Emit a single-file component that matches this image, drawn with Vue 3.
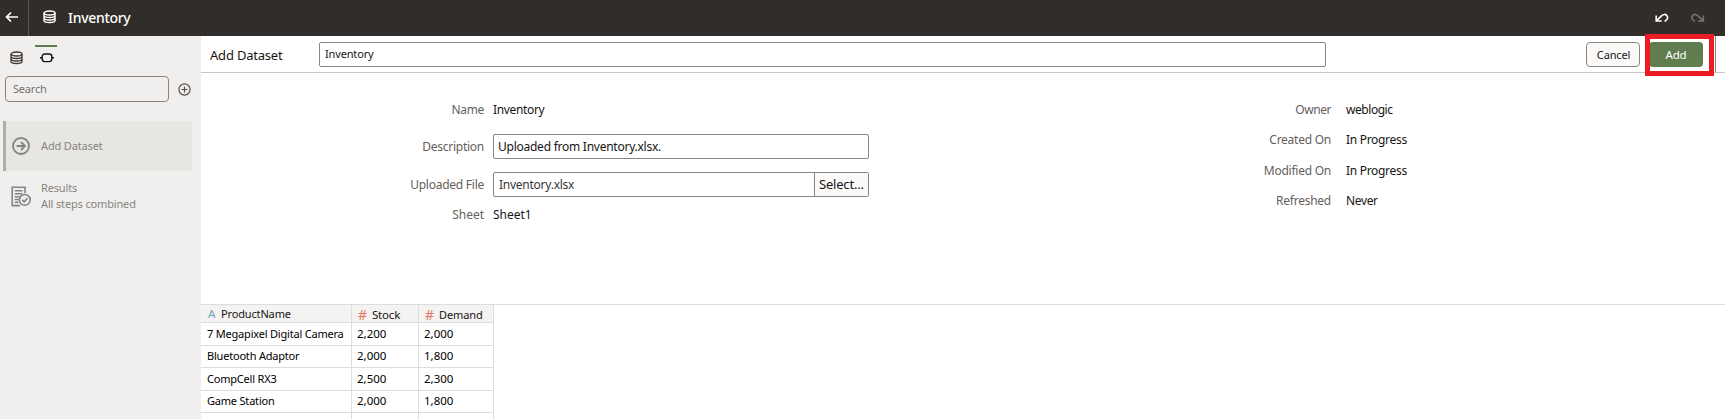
<script setup>
const details = [
  { label: 'Owner', value: 'weblogic', fit: 'v-owner', lfit: 'l-owner' },
  { label: 'Created On', value: 'In Progress', fit: 'v-prog', lfit: 'l-created' },
  { label: 'Modified On', value: 'In Progress', fit: 'v-prog', lfit: 'l-modified' },
  { label: 'Refreshed', value: 'Never', fit: 'v-never', lfit: 'l-refreshed' },
]
const rows = [
  ['7 Megapixel Digital Camera', '2,200', '2,000'],
  ['Bluetooth Adaptor', '2,000', '1,800'],
  ['CompCell RX3', '2,500', '2,300'],
  ['Game Station', '2,000', '1,800'],
  ['', '', ''],
]
</script>

<template>
  <div class="app">
    <header class="top">
      <div class="back">
        <svg width="14" height="12" viewBox="0 0 14 12" fill="none" stroke="#fff" stroke-width="1.7"><path d="M13 6H1.500M6 1.500L1.500 6L6 10.500" /></svg>
      </div>
      <svg class="top-db" width="14" height="14" viewBox="0 0 14 14" fill="none" stroke="#fff" stroke-width="1.400"><ellipse cx="6.500" cy="3" rx="5.500" ry="2" /><path d="M1 3V10.500C1 11.700 3.500 12.500 6.500 12.500S12 11.700 12 10.500V3M1 5.500C1 6.700 3.500 7.500 6.500 7.500S12 6.700 12 5.500M1 8C1 9.200 3.500 10 6.500 10S12 9.200 12 8" /></svg>
      <span class="title">Inventory</span>
      <span class="grow"></span>
      <svg class="undo" width="14" height="11" viewBox="0 0 14 11" fill="none" stroke="#fff" stroke-width="1.600"><path d="M1.200 2.500V8H6.700M1.500 7.700L6.500 2.900C8.500 1 10.500 1 11.700 2.500C13 4.100 12.600 6 11.200 7.200L9.600 8.500" /></svg>
      <svg class="redo" width="14" height="11" viewBox="0 0 14 11" fill="none" stroke="#75716e" stroke-width="1.600"><path d="M12.300 2.500V8H6.800M12 7.700L7 2.900C5 1 3 1 1.800 2.500C.5 4.100 .9 6 2.300 7.200L3.900 8.500" /></svg>
    </header>

    <div class="body">
      <aside class="side">
        <nav class="tabs">
          <div class="tab">
            <svg width="14" height="14" viewBox="0 0 14 14" fill="none" stroke="#3e3a37" stroke-width="1.300"><ellipse cx="6.500" cy="3" rx="5.500" ry="2" /><path d="M1 3V10.500C1 11.700 3.500 12.500 6.500 12.500S12 11.700 12 10.500V3M1 5.500C1 6.700 3.500 7.500 6.500 7.500S12 6.700 12 5.500M1 8C1 9.200 3.500 10 6.500 10S12 9.200 12 8" /></svg>
          </div>
          <div class="tab active">
            <svg width="14" height="10" viewBox="0 0 14 10" fill="none" stroke="#161513" stroke-width="1.400"><rect x="2.200" y="1" width="9.600" height="7.600" rx="2.500" /><path d="M0 4.800H2.200M11.800 4.800H14" /></svg>
          </div>
        </nav>
        <div class="search-row">
          <div class="search"><span class="t-search">Search</span></div>
          <svg width="13" height="13" viewBox="0 0 13 13" fill="none" stroke="#55514e" stroke-width="1.200"><circle cx="6.500" cy="6.500" r="5.600" /><path d="M6.500 3.500V9.500M3.500 6.500H9.500" /></svg>
        </div>
        <div class="step selected">
          <svg width="18" height="18" viewBox="0 0 18 18" fill="none" stroke="#868482" stroke-width="1.800"><circle cx="9" cy="9" r="8" /><path d="M4.600 9H12.800M9 5L13 9L9 13" /></svg>
          <span class="t-step">Add Dataset</span>
        </div>
        <div class="step results">
          <svg width="20" height="21" viewBox="0 0 20 21" fill="none" stroke="#868482" stroke-width="1.600"><path d="M14 7V1.200H1.200V19.600H9M3.700 4.700H11.500M3.700 7.700H11.500M3.700 10.700H8.500M3.700 13.500H7.500M3.700 16.400H7.500" /><circle cx="13.800" cy="13.900" r="5.400" /><path d="M11.200 13.900L13.200 15.800L16.500 12.200" /></svg>
          <div class="lines"><span class="t-results">Results</span><span class="t-all">All steps combined</span></div>
        </div>
      </aside>

      <main class="main">
        <div class="toolbar">
          <span class="tb-label">Add Dataset</span>
          <div class="tb-input"><span class="t-inv">Inventory</span></div>
          <div class="cancel"><span class="t-cancel">Cancel</span></div>
          <div class="add-wrap">
            <div class="add"><span class="t-add">Add</span></div>
            <div class="marker"></div>
          </div>
          <div class="edge"></div>
        </div>

        <section class="form">
          <div class="left">
            <div class="row r-name"><label class="l-name">Name</label><span class="t-name">Inventory</span></div>
            <div class="row r-desc"><label class="l-desc">Description</label><div class="box"><span class="t-desc">Uploaded from Inventory.xlsx.</span></div></div>
            <div class="row r-file"><label class="l-file">Uploaded File</label><div class="box"><span class="t-file">Inventory.xlsx</span><div class="select"><span class="t-select">Select...</span></div></div></div>
            <div class="row r-sheet"><label class="l-sheet">Sheet</label><span class="t-sheet">Sheet1</span></div>
          </div>
          <div class="right">
            <div v-for="d in details" :key="d.label" class="row info"><label :class="d.lfit">{{ d.label }}</label><span :class="d.fit">{{ d.value }}</span></div>
          </div>
        </section>

        <section class="data">
          <div class="grid">
            <div class="th first"><i class="type-a">A</i><span class="t-product">ProductName</span></div>
            <div class="th"><i class="hash">#</i><span class="t-stock">Stock</span></div>
            <div class="th"><i class="hash">#</i><span class="t-demand">Demand</span></div>
            <template v-for="(r, i) in rows" :key="i">
              <div v-for="(c, j) in r" :key="j" class="td" :class="['c' + j, 'r' + i]"><span>{{ c }}</span></div>
            </template>
          </div>
        </section>
      </main>
    </div>
  </div>
</template>

<style>
body { overflow: hidden; }
</style>

<style scoped>
.app { width: 1725px; height: 419px; overflow: hidden; background: #fff; font-family: "Noto Sans", "Open Sans", sans-serif; font-size: 12px; line-height: 16px; color: #161513; white-space: nowrap; display: flex; flex-direction: column; }
.app * { box-sizing: border-box; }
svg { display: block; flex: none; }
.grow { flex: 1; }
.top { height: 36px; flex: none; background: #312d2a; color: #fff; display: flex; align-items: center; }
.back { width: 29px; height: 36px; padding: 11px 0 0 5px; border-right: 1px solid #5b5754; }
.top-db { margin: -2px 0 0 14px; }
.title { margin-left: 11px; font-size: 14px; font-weight: 500; line-height: 20px; letter-spacing: -.3px; }
.undo { margin-right: 22px; }
.redo { margin-right: 20px; }
.body { flex: 1; display: flex; min-height: 0; }
.side { width: 201px; background: #f0efed; flex: none; color: #868482; }
.tabs { display: flex; height: 40px; padding: 9px 0 0 5px; gap: 8px; }
.tab { width: 22px; height: 31px; padding: 4px 0 0 5px; border-top: 2px solid transparent; }
.tab.active { padding: 6px 0 0 5px; border-top-color: #5f7d4f; }
.search-row { display: flex; align-items: center; gap: 9px; padding-left: 5px; height: 26px; }
.search { width: 164px; height: 26px; border: 1px solid #8b8580; border-radius: 4px; padding: 4px 7px; color: #75716e; font-size: 11px; letter-spacing: -.2px; }
.step { width: 189px; margin-left: 3px; display: flex; align-items: center; font-size: 11px; letter-spacing: -.15px; }
.selected { height: 50px; margin-top: 19px; background: #e7e6e2; border-left: 3px solid #a5b59b; padding-left: 6px; gap: 11px; }
.results { height: 50px; padding-left: 8px; gap: 10px; }
.lines { display: flex; flex-direction: column; line-height: 16px; }
.main { flex: 1; min-width: 0; display: flex; flex-direction: column; }
.toolbar { height: 37px; flex: none; border-bottom: 1px solid #c9c7c5; display: flex; align-items: flex-start; padding: 6px 0 0 9px; }
.tb-label { width: 109px; font-size: 13px; line-height: 26px; letter-spacing: -.2px; }
.tb-input { width: 1007px; height: 25px; border: 1px solid #8b8580; border-radius: 2px; padding: 3px 5px; font-size: 11px; letter-spacing: -.15px; }
.cancel { margin-left: 260px; width: 54px; height: 25px; border: 1px solid #8b8580; border-radius: 4px; background: #fbf9f8; text-align: center; line-height: 23px; font-size: 11px; letter-spacing: -.15px; padding-left: 1px; }
.add-wrap { margin-left: 9px; width: 54px; position: relative; }
.add { height: 25px; border-radius: 4px; background: #5f7d4f; color: #fff; text-align: center; line-height: 25px; font-size: 11.500px; letter-spacing: -.2px; }
.marker { position: absolute; left: -4px; top: -8px; width: 69px; height: 42px; border: 5px solid #ed1c24; }
.edge { width: 1px; height: 36px; margin: -6px 0 0 12px; background: #8b8580; }
.form { height: 231px; flex: none; display: flex; letter-spacing: -.25px; }
.left { width: 668px; padding-top: 29px; }
.right { padding-top: 29px; }
.row { display: flex; align-items: center; }
.row label { color: #65605c; text-align: right; flex: none; }
.left label { width: 283px; margin-right: 9px; }
.right label { width: 462px; margin-right: 15px; }
.l-name, .t-name, .v-never { letter-spacing: -.35px; }
.v-owner, .l-owner { letter-spacing: -.45px; }
.v-prog { letter-spacing: -.3px; }
.t-sheet, .l-sheet { letter-spacing: 0; }
.r-name { height: 16px; }
.r-desc { margin-top: 16px; height: 25px; }
.r-file { margin-top: 13px; height: 25px; }
.r-sheet { margin-top: 10px; height: 16px; }
.info { height: 16px; margin-bottom: 14.300px; }
.box { width: 376px; height: 25px; border: 1px solid #8b8580; border-radius: 2px; padding-left: 4px; display: flex; align-items: center; }
.t-file { padding: 1px 0 0 1px; color: #3a3632; }
.select { margin-left: auto; width: 54px; height: 23px; border-left: 1px solid #8b8580; background: #fbf9f8; font-size: 13px; line-height: 22px; padding-left: 4px; letter-spacing: -.2px; }
.data { flex: 1; border-top: 1px solid #dfdddb; overflow: hidden; }
.grid { display: grid; width: 293px; grid-template-columns: 151px 67px 75px; grid-template-rows: 18px 23px 22px 23px 22px 23px; font-size: 11.500px; }
.th, .td { border-right: 1px solid #dfdddb; border-bottom: 1px solid #dfdddb; }
.th { background: #f4f3f2; display: flex; padding-left: 5px; line-height: 19px; height: 18px; overflow: hidden; }
.th.first { padding-left: 7px; line-height: 18px; }
.th i { font-style: normal; }
.type-a { width: 13px; color: #6ba3bb; }
.hash { width: 15px; padding-left: 1px; color: #e07a62; font-size: 14px; }
.t-product { font-size: 11px; letter-spacing: -.15px; }
.t-demand { font-size: 11px; letter-spacing: -.1px; }
.t-stock { letter-spacing: -.2px; }
.td { padding-left: 5px; line-height: 21px; color: #000; }
.td.c0 { font-size: 11px; letter-spacing: -.2px; padding-left: 6px; }
.td.r1, .td.r3 { line-height: 20px; }
</style>
